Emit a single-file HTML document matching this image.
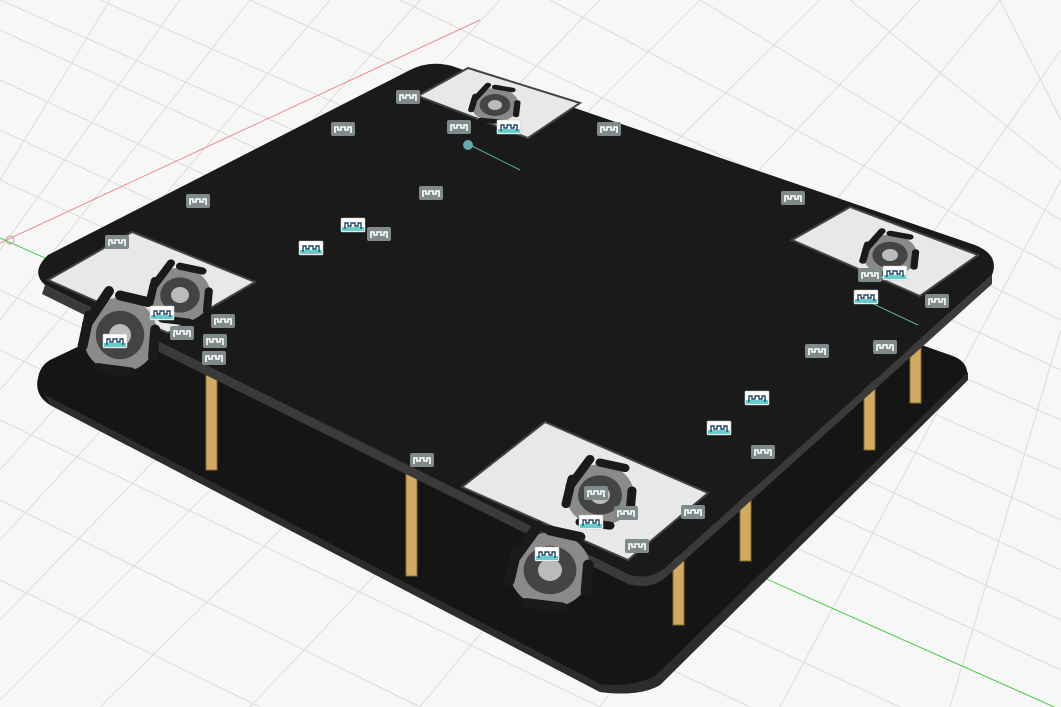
<!DOCTYPE html>
<html><head><meta charset="utf-8"><style>
html,body{margin:0;padding:0;background:#f7f7f7;overflow:hidden}
svg{display:block}
</style></head><body>
<svg width="1061" height="707" viewBox="0 0 1061 707" xmlns="http://www.w3.org/2000/svg">
<defs>
<g id="ic"><rect x="0" y="0" width="24" height="14" rx="2" fill="#7f8a8a"/><path d="M4 11V5h3v3h3V5h4v3h3V5h3v6" fill="none" stroke="#fff" stroke-width="1.6"/></g>
<g id="icw"><rect x="0" y="0" width="24" height="14" rx="1" fill="#fff" stroke="#bbb" stroke-width=".6"/><rect x="1" y="9" width="22" height="4" fill="#6cc"/><path d="M4 11V5h3v3h3V5h4v3h3V5h3v6" fill="none" stroke="#246" stroke-width="1.4"/></g>
<g id="wh"><circle r="34" fill="#8a8a8a"/><circle r="22" fill="#444"/><circle r="10" fill="#bbb"/><path d="M-30-10L-10-40M0-36L25-30M32-5L30 20M10 34L-20 30M-34 10L-28-18" stroke="#1a1a1a" stroke-width="9" stroke-linecap="round"/></g>
</defs>
<rect width="1061" height="707" fill="#f7f7f7"/>
<g stroke="#dcdcdc" stroke-width="1">
<path d="M0 30L1061 520M0 80L1061 570M0 130L1061 620M0 180L1061 670M0 0L1061 470M100 0L1061 420M250 0L1061 370M400 0L1061 320M550 0L1061 270M700 0L1061 220M850 0L1061 170M1000 0L1061 120M0 290L900 707M0 350L750 707M0 420L600 707M0 500L420 707M0 580L260 707"/>
<path d="M0 700L700 0M0 620L600 0M0 540L500 0M0 470L420 0M0 390L330 0M0 320L250 0M0 250L180 0M0 180L110 0M100 707L820 0M250 707L920 0M420 707L1000 0M600 707L1061 50M780 707L1061 180M950 707L1061 330M860 0L1061 -20"/>
</g>
<line x1="0" y1="243" x2="480" y2="20" stroke="#e88" stroke-width="1"/>
<line x1="0" y1="238" x2="1061" y2="710" stroke="#4c4" stroke-width="1"/>
<!-- bottom plate -->
<path d="M50 360L440 175L950 355Q972 362 966 382L660 685Q640 697 600 692L50 405Q34 395 38 378Q40 366 50 360Z" fill="#151515"/>
<path d="M38 378L50 405L600 692Q640 697 660 685L968 380L968 372L655 676Q630 688 600 684L45 395Z" fill="#2c2c2c"/>
<!-- standoffs -->
<g fill="#d2aa62" stroke="#8a6a30" stroke-width="1">
<rect x="206" y="372" width="11" height="98"/><rect x="406" y="470" width="11" height="106"/>
<rect x="673" y="555" width="11" height="70"/><rect x="740" y="485" width="11" height="76"/>
<rect x="864" y="378" width="11" height="72"/><rect x="910" y="330" width="11" height="73"/>
</g>
<!-- top plate -->
<path d="M48 255L410 70Q430 60 452 66L975 245Q1000 255 992 275L665 568Q650 580 630 575L45 285Q30 272 48 255Z" fill="#1a1a1a"/>
<path d="M45 285L630 575Q650 580 665 568L992 275L992 284L665 578Q650 590 628 584L42 294Z" fill="#3a3a3a"/>
<!-- cutouts -->
<g fill="#e8e8e8" stroke="#444" stroke-width="2">
<path d="M418 96L468 68L580 103L528 138Z"/>
<path d="M48 280L132 232L255 282L168 333Z"/>
<path d="M792 240L850 207L978 255L920 296Z"/>
<path d="M462 487L545 422L708 493L628 560Z"/>
</g>
<use href="#wh" transform="translate(495,105) scale(.7,.5)"/>
<use href="#wh" transform="translate(180,295) scale(.9,.8)"/>
<use href="#wh" transform="translate(120,335) scale(1.1,1.1)"/>
<use href="#wh" transform="translate(890,255) scale(.8,.6)"/>
<use href="#wh" transform="translate(600,495) scale(1,.9)"/>
<use href="#wh" transform="translate(550,570) scale(1.2,1.1)"/>
<g stroke="#6aa" stroke-width="1"><line x1="470" y1="145" x2="520" y2="170"/><line x1="865" y1="300" x2="918" y2="325"/></g>
<use href="#ic" x="396" y="90"/><use href="#ic" x="331" y="122"/><use href="#ic" x="447" y="120"/><use href="#icw" x="497" y="120"/>
<use href="#ic" x="597" y="122"/><use href="#ic" x="419" y="186"/><use href="#ic" x="186" y="194"/><use href="#icw" x="341" y="218"/>
<use href="#ic" x="367" y="227"/><use href="#icw" x="299" y="241"/><use href="#ic" x="781" y="191"/><use href="#ic" x="105" y="235"/>
<use href="#ic" x="858" y="268"/><use href="#icw" x="883" y="266"/><use href="#icw" x="854" y="290"/><use href="#ic" x="925" y="294"/>
<use href="#icw" x="150" y="306"/><use href="#ic" x="211" y="314"/><use href="#ic" x="170" y="326"/><use href="#ic" x="203" y="334"/>
<use href="#icw" x="103" y="334"/><use href="#ic" x="202" y="351"/><use href="#ic" x="805" y="344"/><use href="#ic" x="873" y="340"/>
<use href="#icw" x="745" y="391"/><use href="#icw" x="707" y="421"/><use href="#ic" x="751" y="445"/><use href="#ic" x="410" y="453"/>
<use href="#ic" x="584" y="486"/><use href="#ic" x="614" y="506"/><use href="#ic" x="681" y="505"/><use href="#icw" x="579" y="515"/>
<use href="#ic" x="625" y="539"/><use href="#icw" x="535" y="547"/>
<circle cx="468" cy="145" r="5" fill="#6aa"/>
<circle cx="10" cy="240" r="4" fill="none" stroke="#c99"/>
</svg>
</body></html>
